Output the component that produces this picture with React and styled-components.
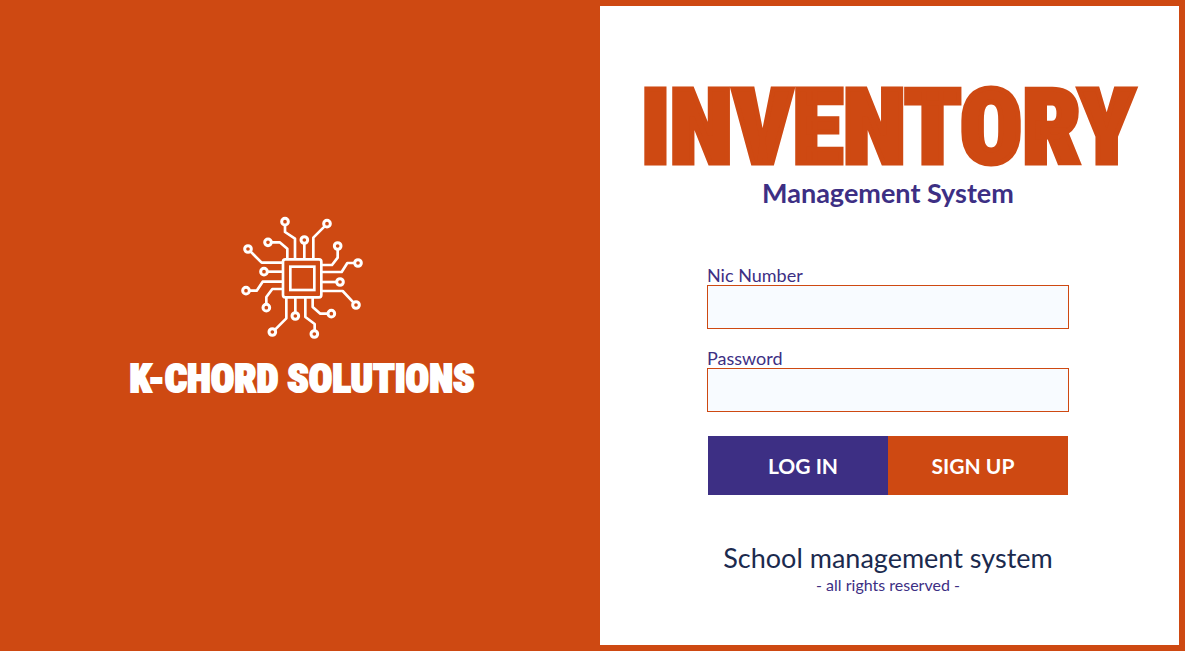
import React from "react";
import styled, { createGlobalStyle } from "styled-components";

const colors = {
  orange: "#ce4912",
  purple: "#3d2f84",
  navy: "#1b2a4e",
  field: "#f8fbff",
};

const display = `Impact, "Roboto Condensed", "Open Sans Condensed", "Noto Sans Condensed", Roboto, sans-serif`;

const GlobalStyle = createGlobalStyle`
  *, *::before, *::after { box-sizing: border-box; }
  body {
    margin: 0;
    background: ${colors.orange};
    font-family: Lato, "Open Sans", sans-serif;
  }
  h1, h2, p { margin: 0; }
`;

const Page = styled.main`
  display: grid;
  grid-template-columns: minmax(0, 594fr) minmax(0, 579fr);
  min-height: 100vh;
  padding: 6px;
  background: ${colors.orange};
`;

const Brand = styled.section`
  display: flex;
  flex-direction: column;
  align-items: center;
  padding: 204px 2px 0 0;
  color: #fff;
`;

const ChipLogo = styled.svg`
  display: block;
  width: 135px;
  height: 135px;
  fill: none;
  stroke: currentColor;
  stroke-width: 8;
  stroke-linejoin: round;
`;

const BrandName = styled.h2`
  margin-top: 4px;
  font: 900 39px/60px ${display};
  white-space: nowrap;
  -webkit-text-stroke: 2px currentColor;
`;

const Panel = styled.section`
  display: flex;
  flex-direction: column;
  align-items: center;
  padding: 72px 3px 0 0;
  background: #fff;
`;

const Title = styled.h1`
  color: ${colors.orange};
  font: 900 103px/100px ${display};
  white-space: nowrap;
  -webkit-text-stroke: 5px currentColor;
`;

const Subtitle = styled.p`
  color: ${colors.purple};
  font-size: 27px;
  font-weight: 700;
  line-height: 30px;
`;

const Form = styled.form`
  display: flex;
  flex-direction: column;
  gap: 20px;
  width: 362px;
  margin-top: 58px;
`;

const Field = styled.div`
  display: flex;
  flex-direction: column;
`;

const Label = styled.label`
  color: ${colors.purple};
  font-size: 18px;
  line-height: 19px;
`;

const Input = styled.input`
  width: 100%;
  height: 44px;
  padding: 0 12px;
  border: 1px solid ${colors.orange};
  border-radius: 0;
  background: ${colors.field};
  color: ${colors.navy};
  font: inherit;
  outline: none;
`;

const Actions = styled.div`
  display: grid;
  grid-template-columns: 1fr 1fr;
  margin-top: 4px;
  padding: 0 1px;
`;

const Button = styled.button`
  height: 59px;
  padding: 0;
  border: 0;
  background: ${(p) => p.$tone};
  color: #fff;
  font-family: inherit;
  font-size: 21px;
  font-weight: 700;
  cursor: pointer;

  &:first-child { padding-left: 10px; }
  &:last-child { padding-right: 10px; }
`;

const Footer = styled.footer`
  margin-top: 46px;
  text-align: center;
`;

const FooterTitle = styled.p`
  color: ${colors.navy};
  font-size: 27px;
  line-height: 34px;
`;

const FooterNote = styled.p`
  color: ${colors.purple};
  font-size: 16px;
  line-height: 20px;
`;

const traces = [
  ["M180 148V86L150 66V46", 150, 35],
  ["M157 148V116L134 97H110", 99, 97],
  ["M208 148V101", 208, 90],
  ["M235 148V83L268 50", 276, 41],
  ["M258 165H291L308 143V119", 308, 108],
  ["M258 186H320L337 159H358", 369, 159],
  ["M258 216H303", 315, 216],
  ["M258 243H323L355 277", 363, 285],
  ["M233 262V291L256 311H278", 289, 311],
  ["M211 262V321L239 342V361", 238, 372],
  ["M181 262V306", 181, 318],
  ["M154 262V325L121 358", 112, 366],
  ["M144 237H112L94 261V282", 94, 293],
  ["M144 215H83L65 242H44", 33, 242],
  ["M144 185H99", 87, 185],
  ["M144 158H80L47 125", 39, 117],
];

const Chip = () => (
  <ChipLogo viewBox="0 0 405 405" aria-hidden="true">
    <rect x="144" y="148" width="115" height="114" rx="7" />
    <rect x="166" y="170" width="72" height="70" strokeLinejoin="miter" />
    {traces.map(([d, x, y]) => (
      <g key={d}>
        <path d={d} />
        <circle cx={x} cy={y} r="10" strokeWidth="9" />
      </g>
    ))}
  </ChipLogo>
);

export default function App() {
  return (
    <>
      <GlobalStyle />
      <Page>
        <Brand>
          <Chip />
          <BrandName>K-CHORD SOLUTIONS</BrandName>
        </Brand>
        <Panel>
          <Title>INVENTORY</Title>
          <Subtitle>Management System</Subtitle>
          <Form onSubmit={(e) => e.preventDefault()}>
            <Field>
              <Label htmlFor="nic">Nic Number</Label>
              <Input id="nic" type="text" />
            </Field>
            <Field>
              <Label htmlFor="password">Password</Label>
              <Input id="password" type="password" />
            </Field>
            <Actions>
              <Button type="submit" $tone={colors.purple}>LOG IN</Button>
              <Button type="button" $tone={colors.orange}>SIGN UP</Button>
            </Actions>
          </Form>
          <Footer>
            <FooterTitle>School management system</FooterTitle>
            <FooterNote>- all rights reserved -</FooterNote>
          </Footer>
        </Panel>
      </Page>
    </>
  );
}
